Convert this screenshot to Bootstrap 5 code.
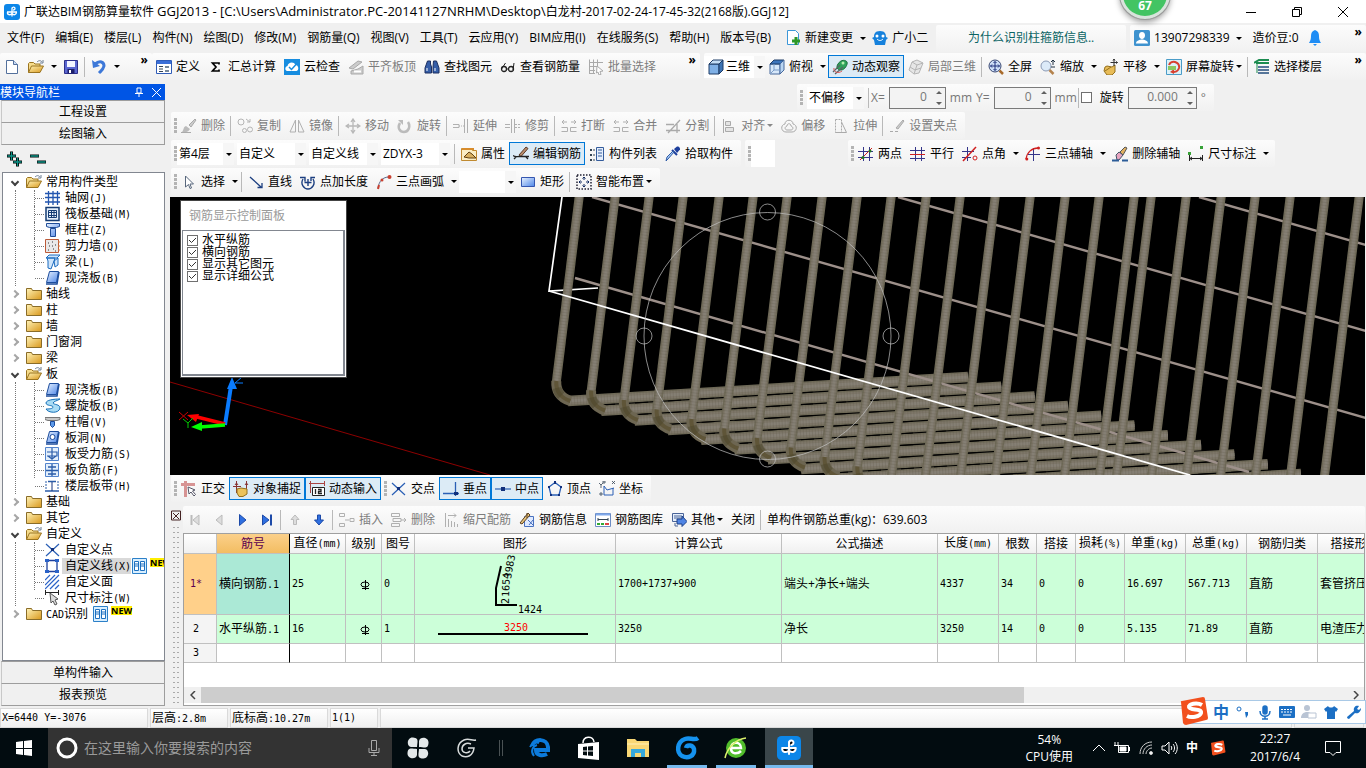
<!DOCTYPE html>
<html lang="zh-CN">
<head>
<meta charset="utf-8">
<meta name="viewport" content="width=device-width, initial-scale=1">
<title>广联达BIM钢筋算量软件 GGJ2013</title>
<link href="https://cdn.jsdelivr.net/npm/bootstrap@5.3.0/dist/css/bootstrap.min.css" rel="stylesheet">
<style>
:root{--face:#f0f0f0;--hot:#0078d7;--hotbg:#dcebf6}
body{font-family:"Open Sans","Noto Sans CJK SC",sans-serif;font-size:12px;line-height:16px;color:#000;background:var(--face);height:100vh;min-height:700px;overflow:hidden}
.mono{font-family:"DejaVu Sans Mono","Noto Sans CJK SC",monospace;font-size:10px}
.ic{width:16px;height:16px;flex:none;display:block;fill:none;stroke:none}
.titlebar{height:23px;background:#fff}
.path{font-size:13px}
.menurow{height:30px}
.menus{padding-left:2px}
.mainrow{height:31px}
.strip{display:flex;align-items:center;height:27px;background:linear-gradient(#fcfcfc,#f1f1f1);border-radius:2px;white-space:nowrap;flex:none}
.grip{width:3px;height:15px;margin-left:3px;background:repeating-linear-gradient(#b4b4b4 0 3px,transparent 3px 4px);flex:none}
.tool{display:flex;align-items:center;gap:4px;padding:0 4px;height:23px;border:0;border-radius:0;background:none;color:#000;font-size:12px;line-height:16px;white-space:nowrap;flex:none}
.tool:disabled{color:#7d7d7d;opacity:1;border:0}
.tool.on{background:var(--hotbg);box-shadow:inset 0 0 0 1px var(--hot)}
.menuitem{padding:0 6px 0 5px}
.drop{width:11px;height:22px;border:0;padding:0;background:none;flex:none;display:flex;align-items:center;justify-content:center}
.drop::after,.dd::after{content:"";border:3px solid transparent;border-top-color:#000;border-bottom:0}
.dd::after{margin-left:-2px}
.dd:disabled::after{border-top-color:#888}
.vline{width:1px;height:20px;background:#b9b9b9;margin:0 2px 0 1px;flex:none}
.combo{appearance:none;height:22px;border:0;border-radius:0;background:#fff url("data:image/svg+xml,%3Csvg xmlns='http://www.w3.org/2000/svg' width='11' height='22'%3E%3Cpath fill='%23f6f6f6' d='M0 0h11v22H0z'/%3E%3Cpath d='M3 10h6L6 13z'/%3E%3C/svg%3E") right center no-repeat;font-size:12px;line-height:16px;padding:0 12px 0 2px;margin-right:3px;color:#000;flex:none}
.w-s{width:57px}.w-m{width:69px}.w-v{width:41px}
.more{align-self:flex-start;border:0;background:none;padding:2px 4px 0;line-height:10px;font-size:12px;font-weight:700}
.spin{height:22px;border:1px solid #7a7a7a;background:#f3f3f3 url("data:image/svg+xml,%3Csvg xmlns='http://www.w3.org/2000/svg' width='12' height='20'%3E%3Cpath fill='%23606060' d='M3 6h6L6 3zM3 14h6L6 17z'/%3E%3C/svg%3E") right center no-repeat;color:#777;font-size:12px;text-align:right;padding:0 18px 2px 0;border-radius:0}
.dim{color:#777}
.teal{color:#0a6464}
.side{width:165px;padding-left:1px}
.work{padding-left:2px;padding-right:1px}
.sidehead{height:16px;background:#0055e5;color:#fff;line-height:15px;margin-left:-1px}
.navbtn{height:23px;background:var(--face);border:1px solid #9d9d9d;border-left-color:#c8c8c8;border-radius:0;font-size:12px;line-height:16px;padding:0;margin-top:-1px;text-align:center}
.tree{border:1px solid #828790;background:#fff;overflow:hidden;margin-left:1px;padding-top:1px}
.tree ul{list-style:none;margin:0;padding:0}
.node{display:flex;align-items:center;height:16px;gap:4px;white-space:nowrap}
.node>*,.kids .node::before{flex:none}
.node>.ic{margin-left:1px}
.top{padding-left:6px}
.twist{width:12px;height:12px;border:0;padding:0;background:none;flex:none;display:flex;align-items:center;justify-content:center}
.twist::before{content:"";width:6px;height:6px;border:solid #a6a6a6;border-width:2px 2px 0 0;transform:rotate(45deg)}
.open>.node>.twist::before{border-color:#404040;transform:rotate(135deg)}
.kids{margin-left:12px!important;border-left:1px dotted #777}
.kids .node{margin-left:18px;border-left:1px dotted #777}
.kids .node::before{content:"";width:9px;border-top:1px dotted #777;margin-right:-3px}
.kids .node:last-child{border-left-color:transparent}
.kids .ic{margin-left:0}
.picked{background:#d9d9d9;margin-left:-3px;padding-left:3px;height:16px}
.picked+.ic{margin-left:-3px}
.newtag{background:#ffee00;font-weight:700;font-size:9px;line-height:9px;align-self:flex-start;margin-left:-2px}
.view{background:#000;min-height:100px;overflow:hidden;margin-left:3px}
.scene{position:absolute;inset:0;width:100%;height:100%}
.ctl{position:absolute;left:10px;top:3px;width:167px;height:178px;background:#fff;border:1px solid #444}
.ctlhead{color:#9a9a9a;height:29px;line-height:22px}
.ctlist{border:solid #828790;border-width:1px 2px 2px 1px;margin:0 1px;height:146px;padding-top:3px}
.ctlist label{display:flex;align-items:center;height:12px;gap:4px;line-height:12px}
.tick{appearance:none;width:11px;height:11px;border:1px solid #707070;background:#fff;margin:0}
.tick:checked{background:url("data:image/svg+xml,%3Csvg xmlns='http://www.w3.org/2000/svg' width='9' height='9'%3E%3Cpath d='M1 4l2.500 2.500L8 2' fill='none' stroke='%23333'/%3E%3C/svg%3E") center no-repeat}
.dock{width:10px;margin-right:2px}
.dotgrip{width:8px;background:radial-gradient(circle,#aaa 1px,transparent 1px) 0 0/4px 5px}
.frame{height:173px;border:1px solid #a0a0a0;background:#fff;overflow:hidden}
.grid{table-layout:fixed;width:1240px;border-collapse:separate;border-spacing:0}
.grid th,.grid td{border:solid #c0c0c0;border-width:0 1px 1px 0;padding:0 0 0 2px;white-space:nowrap;overflow:hidden;vertical-align:middle;line-height:14px}
.grid thead th{height:20px;font-weight:400;text-align:center;background:linear-gradient(#fff,#f0f0f0);padding:0}
.grid tbody th{font-weight:400;text-align:center;padding:0 8px 0 0;background:#f4f4f4}
.grid .filled td{background:#ccffd9}
.grid tr>:nth-child(2){border-right-color:#000}
.grid thead th.hot{background:linear-gradient(#fbd08a,#f3bd62);color:#5b0050}
.grid tbody th.hot{background:#ffd08a;color:#5b0050}
.grid .filled td.cell{background:#abe9d6}
.r1{height:61px}.r2{height:29px}.r3{height:19px}
.fig{padding:0!important}.fig svg{display:block}
.sbar{height:16px;background:#f0f0f0;margin-bottom:2px}
.sarrow{width:17px;border:0;padding:0;background:none;line-height:0}
.sthumb{width:823px;background:#cdcdcd}
.status{height:22px;padding-top:2px}
.status>div{border:1px solid #dadada;background:linear-gradient(#fff,#f0f0f0);margin-right:2px;padding-left:1px;line-height:17px}
.task{height:40px;background:#020c10;color:#fff}
.task button{border:0;background:none;padding:0;height:40px;display:flex;align-items:center;justify-content:center;color:#fff;flex:none}
.find{background:#333;width:344px}
.find input{background:none;border:0;font-size:14px;color:#fff;padding:0;width:276px;outline:0;margin-left:-2px}
.find input::placeholder{color:#9a9a9a;opacity:1}
.task .run{box-shadow:inset 0 -3px #76b9ed}
.app{width:40px;margin-right:9px}
.task .cur{background:#3a464a}
.badge67{position:absolute;right:196px;top:-30px;width:50px;height:49px;border-radius:50%;background:#43c463;border:3px solid #d9e3dc;outline:1px solid #9a9a9a;box-shadow:0 3px 6px #0006;color:#fff;font-weight:700;text-align:center;padding-top:25px;line-height:16px}
.ime{position:absolute;right:0;bottom:44px;height:24px;background:#fff;border:1px solid #a9c9e6;padding:0 1px 0 21px}
.ime .logo{position:absolute;left:-10px;top:-5px;width:30px;height:30px}
.tiny{width:22px;height:22px;border:0;padding:0;background:none;display:flex;align-items:center;justify-content:center;color:#1c6fc4}
.lead1{margin-left:630px}.lead2{margin-left:73px}
.wctl{width:46px;height:22px;border:0;background:none;padding:0;display:flex;align-items:center;justify-content:center}
</style>
</head>
<body class="d-flex flex-column position-relative">
<svg width="0" height="0" class="position-absolute">
<defs>
<linearGradient id="gy" x1="0" y1="0" x2="1" y2="1"><stop offset="0" stop-color="#fff3b8"/><stop offset="1" stop-color="#d9981c"/></linearGradient>
<linearGradient id="gb" x1="0" y1="0" x2="1" y2="1"><stop offset="0" stop-color="#e9f3ff"/><stop offset="1" stop-color="#4d86e8"/></linearGradient>
</defs>
<symbol id="i-app" viewBox="0 0 16 16"><rect width="16" height="16" rx="3" fill="#0c86e8"/><path d="M8 3.500v9M3 8h10M8 7.500V5c0-2.500 3-2.500 3-.5 0 1-1 1.500-2 1.500M3.500 8c-.5 3 3 3.500 4.500 1.500M12.500 8c0 3-3 3.500-4.500 1.500" stroke="#fff" stroke-width="1.300"/></symbol>
<symbol id="i-new" viewBox="0 0 16 16"><path d="M2.500 1.500h7l4 4v9h-11z" fill="#fff" stroke="#53709c"/><path d="M9.500 1.500v4h4" fill="#c9dbf5" stroke="#53709c"/></symbol>
<symbol id="i-open" viewBox="0 0 16 16"><path d="M.5 13.500v-9l1-1h4l1.500 1.500h5v2" fill="#f6dc8c" stroke="#9a7420"/><path d="M.5 13.500l3-6.500h12l-3.500 6.500z" fill="url(#gy)" stroke="#9a7420"/><path d="M9 3c2-2 4-1.500 5 0m1-2v3h-3" stroke="#6a7c92"/></symbol>
<symbol id="i-save" viewBox="0 0 16 16"><path d="M1.500 1.500h13v13h-13z" fill="#5a66d0" stroke="#2c2f8a"/><path d="M4 2h8v6H4z" fill="#f2f4ff"/><path d="M4.500 10h7v4.500h-7z" fill="#1c1f6a"/><path d="M6 11h2v3H6z" fill="#fff"/></symbol>
<symbol id="i-undo" viewBox="0 0 16 16"><path d="M1 1l1 8 7-2z" fill="#3d78d8"/><path d="M4 5c5-4 9-2 9 2-1 4-3 5-5 7" stroke="#3d78d8" stroke-width="3"/></symbol>
<symbol id="i-def" viewBox="0 0 16 16"><path d="M.5 1.500h15v13H.5z" fill="#fff" stroke="#2f5cb8"/><path d="M1 2h14v3H1z" fill="#3b6fd8"/><path d="M3 7.500h4m-4 2.500h4m-4 2.500h4" stroke="#345" /><path d="M9 7h4v2H9zm0 4h4v2H9z" fill="#789"/></symbol>
<symbol id="i-sum" viewBox="0 0 16 16"><path d="M11 5.500V4H4.500L8 8l-3.500 4H11v-1.500" stroke="#000" stroke-width="1.700"/></symbol>
<symbol id="i-cloud" viewBox="0 0 16 16"><path d="M0 0h16v16H0z" fill="#178de0"/><path d="M3 12c-3-1-1.500-5 .5-5C4 3 10 2 11.500 6c3 0 4 5 1 6z" fill="#fff"/><path d="M5 8l2.500 2.500L12 5.500" stroke="#178de0" stroke-width="1.500"/></symbol>
<symbol id="i-flat" viewBox="0 0 16 16"><path d="M1 9l9-7 4 1-9 7zM3 12v3h12V7l-5 3z" fill="#ccc" stroke="#aaa"/><path d="M6 12.500h7" stroke="#fff" stroke-width="2"/></symbol>
<symbol id="i-find" viewBox="0 0 16 16"><path d="M3.500 2h3v3l1 3v6H1V9zM9.500 2h3L15 9v5H9V8z" fill="#355ea8" stroke="#1d2f60"/><path d="M3 9v3m8-3v3" stroke="#fff"/></symbol>
<symbol id="i-glass" viewBox="0 0 16 16"><circle cx="4" cy="10" r="2.500" stroke="#222" stroke-width="1.300"/><circle cx="11" cy="10" r="2.500" stroke="#222" stroke-width="1.300"/><path d="M6.500 10h2M1.500 10l4-6M13 11l1-7" stroke="#222"/></symbol>
<symbol id="i-batch" viewBox="0 0 16 16"><path d="M1.500.5v14M5.500.5v14M9.500.5v8M1 3.500h14M1 7.500h9M1 11.500h6M1 14.500h6" stroke="#aaa"/><path d="M9 7l6 5-3 .5 1 3-2 .5-1-3-1.500 1z" fill="#fff" stroke="#aaa"/></symbol>
<symbol id="i-cube" viewBox="0 0 16 16"><path d="M1 5h10v10H1z" fill="#7fb0e6" stroke="#1f3c66"/><path d="M1 5l4-4h10l-4 4z" fill="#c4def6" stroke="#1f3c66"/><path d="M11 5l4-4v10l-4 4z" fill="#3e74b4" stroke="#1f3c66"/></symbol>
<symbol id="i-topv" viewBox="0 0 16 16"><path d="M1 5h10v10H1z" fill="#d7e8fa" stroke="#47699c"/><path d="M1 5l4-4h10l-4 4z" fill="#3d76bd" stroke="#1f3c66"/><path d="M11 5l4-4v10l-4 4z" fill="#b9d5f2" stroke="#47699c"/><path d="M5 5v6l-4 4m4-4h6" stroke="#7b9cc8"/></symbol>
<symbol id="i-orbit" viewBox="0 0 16 16"><path d="M6 5c3-5 8-4 9-2s-2 8-6 8-5-3-3-6z" fill="#2fa35c" stroke="#1a6e3c"/><path d="M1 13L8 6M3 15l8-7" stroke="#566" stroke-width="1.300"/><circle cx="11" cy="4" r="1.500" fill="#b4efb0"/><path d="M2 9c-1 4 4 6 8 3" stroke="#d55"/></symbol>
<symbol id="i-part" viewBox="0 0 16 16"><path d="M4 3l5-2 6 3-4 10-5 1-5-4z" fill="#e6e6e6" stroke="#b5b5b5"/><path d="M4 3l5 3 6-2M9 6l-3 9M2 8l5 3 6-2" stroke="#b5b5b5"/></symbol>
<symbol id="i-full" viewBox="0 0 16 16"><circle cx="7" cy="7" r="6" fill="#cfe0f8" stroke="#3b4a74"/><path d="M7 2.500v9M2.500 7h9M5.500 4L7 2.500 8.500 4m-3 6L7 11.500 8.500 10M4 5.500L2.500 7 4 8.500m6-3L11.500 7 10 8.500" stroke="#1c2f7a"/><path d="M11.500 11.500L15 15" stroke="#a86b2c" stroke-width="2.500"/></symbol>
<symbol id="i-zoom" viewBox="0 0 16 16"><circle cx="6" cy="7" r="5" fill="#dceaf8" stroke="#8b9ab5"/><path d="M9.500 11l4 4" stroke="#b4824c" stroke-width="2.500"/><path d="M13 1v5m-2-3l2-2 2 2M11 8h4" stroke="#234"/></symbol>
<symbol id="i-pan" viewBox="0 0 16 16"><path d="M2 8l2-1 5 1 3-2v7l-3 3H4l-3-4z" fill="#e8bc58" stroke="#95701c"/><path d="M2 12l6-4" stroke="#95701c"/><path d="M11 0v7M7.500 3.500h7M10 1.500L11 0l1 1.500M13 2.500l1.500 1L13 4.500" stroke="#333"/></symbol>
<symbol id="i-srot" viewBox="0 0 16 16"><path d="M.5.500h15v15H.5z" fill="#dcf1f8" stroke="#4a9cc8"/><path d="M3 6c2-6 11-3 10 3-1 3-3 4-5 4" stroke="#d84030" stroke-width="2"/><path d="M8 10v5l-4-2z" fill="#d84030"/><path d="M2 7h8v4H2z" fill="#8cc860"/></symbol>
<symbol id="i-floor" viewBox="0 0 16 16"><path d="M0 4l5-3h10M2 4h13" stroke="#1c8c50" stroke-width="2"/><path d="M4 8h11M4 11h11M4 14h11" stroke="#234c7c" stroke-width="1.700"/><path d="M3 5v9" stroke="#1c8c50"/></symbol>
<symbol id="i-chg" viewBox="0 0 16 16"><path d="M2.500.500h8l3 3v11h-11z" fill="#fff" stroke="#3b97d8"/><path d="M11 7v8M7 11h8" stroke="#2c9828" stroke-width="3"/></symbol>
<symbol id="i-bot" viewBox="0 0 16 16"><path d="M8 1c5 0 6 3 6 6l2 1-2 2-1 5H3L2 10 0 8l2-1c0-3 1-6 6-6z" fill="#1681dc"/><circle cx="5" cy="6" r="1.500" fill="#fff"/><circle cx="11" cy="6" r="1.500" fill="#fff"/><path d="M5 9c2 2 4 2 6 0" stroke="#fff"/></symbol>
<symbol id="i-user" viewBox="0 0 16 16"><rect width="16" height="16" rx="1.500" fill="#3f93cf"/><path d="M8 2c2 0 3 1.500 3 3.500S9.500 9 8 9 5 7.500 5 5.500 6 2 8 2zM2 13.500c0-3 4-4 6-4s6 1 6 4z" fill="#fff"/></symbol>
<symbol id="i-bell" viewBox="0 0 16 16"><path d="M8 0c3 1 4 3 4 6 0 4 1 5 2 7H2c1-2 2-3 2-7 0-3 1-5 4-6z" fill="#1f8df5"/><path d="M6 14h4l-2 2z" fill="#1f8df5"/></symbol>
<symbol id="i-brush" viewBox="0 0 16 16"><path d="M8 7l6-6 1 1-5 7z" fill="#ccc" stroke="#aaa"/><path d="M5 8l4 3c-2 4-5 3-8 3 2-2 1-5 4-6z" fill="#bbb"/><path d="M0 14.500h10" stroke="#aaa"/></symbol>
<symbol id="i-copy" viewBox="0 0 16 16"><circle cx="4" cy="4" r="3" stroke="#b5b5b5"/><circle cx="7.500" cy="12.500" r="2" stroke="#b5b5b5"/><circle cx="13" cy="11.500" r="2.500" stroke="#b5b5b5"/><path d="M9 1l4 3m0-3v3h-3" stroke="#b5b5b5"/></symbol>
<symbol id="i-mir" viewBox="0 0 16 16"><path d="M6.500 2v12H1z M9.500 2v12H15z" stroke="#b0b0b0"/></symbol>
<symbol id="i-move" viewBox="0 0 16 16"><path d="M8 2v12M2 8h12M6 4l2-3 2 3M6 12l2 3 2-3M4 6L1 8l3 2m8-4l3 2-3 2" stroke="#b8b8b8" stroke-width="1.300"/></symbol>
<symbol id="i-rot" viewBox="0 0 16 16"><path d="M3 5c-3 5 0 9 4 9s7-5 4-10" stroke="#bbb" stroke-width="2.500"/><path d="M1 2h5v5z" fill="#bbb"/></symbol>
<symbol id="i-ext" viewBox="0 0 16 16"><path d="M0 6.500h6v3H0M11.500 1v14M14.500 1v14" stroke="#b0b0b0"/><path d="M6 8h5" stroke="#b0b0b0" stroke-dasharray="1 1"/></symbol>
<symbol id="i-trim" viewBox="0 0 16 16"><path d="M0 6.500h5M0 9.500h5M6.500 1v14M9.500 1v14" stroke="#b0b0b0"/><path d="M10 6.500h5m-5 3h5" stroke="#b0b0b0" stroke-dasharray="2 1"/></symbol>
<symbol id="i-brk" viewBox="0 0 16 16"><path d="M1 4h5m4 0h5M3 2L1 4l2 2m10-4l2 2-2 2M.5 9.500h6v4h-6M15.500 9.500h-6v4h6" stroke="#b0b0b0"/></symbol>
<symbol id="i-split" viewBox="0 0 16 16"><path d="M1 6.500h8M1 12.500h14M3 15L15 2M12 6v9" stroke="#aaa" stroke-width="1.300"/></symbol>
<symbol id="i-al" viewBox="0 0 16 16"><path d="M2.500 1v14" stroke="#aaa"/><path d="M4.500 3.500h5v4h-5zM4.500 9.500h8v4h-8z" stroke="#aaa" fill="#e4e4e4"/></symbol>
<symbol id="i-off" viewBox="0 0 16 16"><path d="M4 6c0-5 8-5 8 0 5 1 4 8-1 8H5C0 14-1 7 4 6z" stroke="#aaa"/><path d="M6 8c0-3 4-3 4 0 3 1 2 4 0 4H6c-2 0-3-3 0-4z" stroke="#aaa"/></symbol>
<symbol id="i-str" viewBox="0 0 16 16"><path d="M2.500 1.500h6v13h-6z" stroke="#aaa" stroke-dasharray="2 1"/><path d="M8.500 4l5 10.500h-11" stroke="#aaa"/></symbol>
<symbol id="i-grip" viewBox="0 0 16 16"><path d="M1 13.500h3m2 0h3M7 10l7-8 1 1-6 8z" stroke="#aaa" fill="#ccc"/></symbol>
<symbol id="i-prop" viewBox="0 0 16 16"><path d="M.5 2.500h10l1 2h4v10H.5z" fill="#fbeec4" stroke="#c08a30"/><path d="M1 3h12" stroke="#d88c2c" stroke-width="2"/><path d="M3 11l5-5 3 2 4 4H8z" fill="#d8b060" stroke="#604010"/></symbol>
<symbol id="i-edit" viewBox="0 0 16 16"><path d="M6 9l7-8 2 1.500-7 8z" fill="#b98d6c" stroke="#5c3a28"/><path d="M0 9.500c2 2 4 1 6 1h10M1 13l2-2m10 0l2 2" stroke="#222" stroke-width="1.300"/></symbol>
<symbol id="i-list" viewBox="0 0 16 16"><path d="M7.500 1.500h7v13h-7z" fill="#e4eefc" stroke="#345c9c"/><path d="M9 4h4M9 7h4M9 10h4" stroke="#345c9c"/><path d="M1 3h2v2H1zm0 5h2v2H1zm0 5h2v2H1z" fill="#345"/><path d="M4 4h2m-2 5h2m-2 5h2" stroke="#345"/></symbol>
<symbol id="i-pick" viewBox="0 0 16 16"><path d="M9 3l3-2.500c3 0 3 2 3 3L12 7z" fill="#1d3f9c"/><path d="M7 4l5 5" stroke="#1d3f9c" stroke-width="2"/><path d="M9 6l-6 7-2 2 1-4 6-6z" fill="#a9cbf4" stroke="#2f5ca8"/></symbol>
<symbol id="i-2p" viewBox="0 0 16 16"><path d="M5.500 1v14M11.500 1v14M0 5.500h15M0 11.500h15" stroke="#35358a"/><path d="M2 14L14 2" stroke="#d02020"/><circle cx="5" cy="11.500" r="1.500" fill="#207a20"/><circle cx="12" cy="5" r="1.500" fill="#207a20"/></symbol>
<symbol id="i-par" viewBox="0 0 16 16"><path d="M5.500 1v14M11.500 1v14M0 4.500h15M0 12.500h15" stroke="#35358a"/><path d="M0 8.500h15" stroke="#d02020"/></symbol>
<symbol id="i-ang" viewBox="0 0 16 16"><path d="M5.500 1v14M0 5.500h12M0 11.500h9" stroke="#35358a"/><path d="M1 15L14 1" stroke="#d02020" stroke-width="1.500"/><circle cx="13" cy="12" r="2" stroke="#d02020"/></symbol>
<symbol id="i-3ax" viewBox="0 0 16 16"><path d="M8.500 2v13M3 8.500h12" stroke="#35358a"/><path d="M1 13C2 6 7 2 13 2" stroke="#d02020" stroke-width="1.300"/><circle cx="1.800" cy="13" r="1.500" fill="#d02020"/><circle cx="13.500" cy="2" r="1.500" fill="#d02020"/></symbol>
<symbol id="i-dax" viewBox="0 0 16 16"><path d="M8 6l5-5 2 1-4 7z" fill="#e0b060" stroke="#555"/><path d="M4 9l3-3 4 3-4 5H5z" fill="#e8a4c0" stroke="#456"/><path d="M0 14.500h7m3 0h6" stroke="#2c5c98" stroke-width="2"/></symbol>
<symbol id="i-dim" viewBox="0 0 16 16"><path d="M1.500 9v6M14.500 9v6M2 12.500h12M4 11l-2 1.500L4 14m8-3l2 1.500-2 1.500" stroke="#222"/><path d="M0 6h3v3H0zM12 0h3v3h-3z" fill="#37a237"/></symbol>
<symbol id="i-sel" viewBox="0 0 16 16"><path d="M4.500 2v11l3-2.500 1.500 4 1.500-.5-1.500-4h3.500z" fill="#fff" stroke="#58677c"/></symbol>
<symbol id="i-line" viewBox="0 0 16 16"><path d="M2 3l11 10M9.500 13.500H14V9" stroke="#1c3f80" stroke-width="1.300"/></symbol>
<symbol id="i-len" viewBox="0 0 16 16"><path d="M3 5c-3 5 1 10 5 10s8-5 5-10M0 3.500h5v4M11 7V3.500h4M8 5v7M4.500 8.500h7" stroke="#1c3f80" stroke-width="1.400"/></symbol>
<symbol id="i-arc" viewBox="0 0 16 16"><path d="M2 14C3 7 7 3 13 3" stroke="#56688c"/><path d="M2 15l1-4" stroke="#c84030" stroke-width="2"/><circle cx="13.500" cy="3" r="2" fill="#c84030"/><circle cx="6" cy="6" r="1.500" fill="#c84030"/></symbol>
<symbol id="i-rect" viewBox="0 0 16 16"><path d="M1.500 3.500h13v9h-13z" fill="url(#gb)" stroke="#3456b0"/></symbol>
<symbol id="i-smart" viewBox="0 0 16 16"><path d="M1 1h14v14H1z" stroke="#223" stroke-width="1.500" stroke-dasharray="1.500 1.500"/><path d="M8 3v3m0 4v3M3 8h3m4 0h3M6.500 4.500L8 3l1.500 1.500m-3 7L8 13l1.500-1.500m-5-5L3 8l1.500 1.500m7-3L13 8l-1.500 1.500" stroke="#112a60"/></symbol>
<symbol id="i-ortho" viewBox="0 0 16 16"><path d="M0 3.500h14M4.500 0v16" stroke="#c96a6a" stroke-width="3" opacity=".7"/><path d="M7 6l1 7 2-2 3 4 1.500-1.500-3-3.500 2.500-1z" fill="#fff" stroke="#556"/></symbol>
<symbol id="i-snap" viewBox="0 0 16 16"><path d="M3.500 0v12M13.500 0v9M0 5.500h8M2 4l1.500-2L5 4m7 0l1.500-2L15 4" stroke="#833"/><path d="M4 8l4-1 6 1v5l-4 2.500H6L4 12z" fill="#ecc35c" stroke="#95701c"/></symbol>
<symbol id="i-dyn" viewBox="0 0 16 16"><path d="M0 2.500h16M1.500 0v12M15.500 0v5" stroke="#a44"/><path d="M3.500 6.500h12v8h-12z" fill="#fff" stroke="#222"/><path d="M6.500 8v5M9 8.500h3v2H9.500v2H13" stroke="#222" stroke-width="1.300"/></symbol>
<symbol id="i-x" viewBox="0 0 16 16"><path d="M1 2l13 12M14 2L1 14" stroke="#2a5fb5" stroke-width="1.200"/><path d="M6 6h3v3H6z" fill="#12307c"/></symbol>
<symbol id="i-perp" viewBox="0 0 16 16"><path d="M0 12.500h16M12.500 1v14" stroke="#2a5fb5" stroke-width="1.300"/><path d="M11 11h4v3h-4z" fill="#12307c"/></symbol>
<symbol id="i-mid" viewBox="0 0 16 16"><path d="M0 8h16" stroke="#2a5fb5" stroke-width="1.200"/><path d="M6 6h4v4H6z" fill="#12307c"/></symbol>
<symbol id="i-pent" viewBox="0 0 16 16"><path d="M8 1.500l6 4.500-2 8H4L2 6z" stroke="#2a5fb5" stroke-width="1.300"/><path d="M7 0h2v3H7zM1 5h2v2H1zm12 0h2v2h-2zM3 13h2v2H3zm8 0h2v2h-2z" fill="#12307c"/></symbol>
<symbol id="i-coord" viewBox="0 0 16 16"><path d="M5 5l3 4 7-2M5 5v9h9V7" stroke="#2a5fb5"/><path d="M0 2l2 2 2-2M2 4v3M13 0l3 3m0-3l-3 3M4 0h2v2H4zM1 12h2v2H1z" stroke="#345" stroke-width=".8"/></symbol>
<symbol id="i-first" viewBox="0 0 16 16"><path d="M4.500 3v10" stroke="#bbb" stroke-width="2"/><path d="M12 3v10L6 8z" fill="#ddd" stroke="#bbb"/></symbol>
<symbol id="i-prev" viewBox="0 0 16 16"><path d="M11 3v10L5 8z" fill="#ddd" stroke="#bbb"/></symbol>
<symbol id="i-next" viewBox="0 0 16 16"><path d="M4.500 2.500v11L11 8z" fill="#2f6fe0" stroke="#1d4aa8"/></symbol>
<symbol id="i-last" viewBox="0 0 16 16"><path d="M3.500 3v10L10 8z" fill="#2f6fe0" stroke="#1d4aa8"/><path d="M12 2.500v11" stroke="#1d4aa8" stroke-width="2"/></symbol>
<symbol id="i-up" viewBox="0 0 16 16"><path d="M8 3l4 4.500H9.500v5h-3v-5H4z" fill="#ddd" stroke="#bbb"/></symbol>
<symbol id="i-down" viewBox="0 0 16 16"><path d="M8 13l4.500-5h-3V3h-3v5h-3z" fill="#2f6fe0" stroke="#1d4aa8"/></symbol>
<symbol id="i-ins" viewBox="0 0 16 16"><path d="M.5 1.500h5v3h-5zM.5 11.500h5v3h-5zM6 8h4M11 6.500h4v3h-4z" stroke="#b0b0b0"/></symbol>
<symbol id="i-del" viewBox="0 0 16 16"><path d="M.5 1.500h8v3h-8zM.5 11.500h8v3h-8zM10 8h5m-2-2l2 2-2 2M2 6.500h8v3H2z" stroke="#b0b0b0"/></symbol>
<symbol id="i-scale" viewBox="0 0 16 16"><path d="M2.500 1v14M5 3.500h8m-2-2l2 2-2 2M5.500 7v8M8.500 9v6M11.500 10v5M14.500 12v3" stroke="#b0b0b0"/></symbol>
<symbol id="i-info" viewBox="0 0 16 16"><path d="M5.500 4.500h9v10h-9z" fill="#dfeaff" stroke="#4a72c0"/><path d="M8 1v5M1 11L9 1l2 2-8 9z" fill="#e7c47c" stroke="#5c4020"/><path d="M9 8l5 5m0-5l-4 5" stroke="#4a72c0"/></symbol>
<symbol id="i-lib" viewBox="0 0 16 16"><path d="M.5 1.500h15v13H.5z" fill="#fff" stroke="#6c8cc4"/><path d="M1 2.500h14" stroke="#7fa8ea" stroke-width="2"/><path d="M3 7.500h10M3 6v3m10-3v3" stroke="#345"/><path d="M2 12h3m1 0h3" stroke="#3a3" stroke-width="2"/><path d="M10 12h4" stroke="#d44" stroke-width="2"/></symbol>
<symbol id="i-oth" viewBox="0 0 16 16"><path d="M1.500 1.500h11v8h-11z" fill="#e6effc" stroke="#4a6498"/><path d="M3 4h8M3 6h8M4 11v3h3" stroke="#4a6498"/><path d="M6 7h5V4l5 5.500-5 5V12H6z" fill="#4f84e4" stroke="#1d4088"/></symbol>
<symbol id="i-fold" viewBox="0 0 16 16"><path d="M.5 2.500h5l1 2h9v9H.5z" fill="url(#gy)" stroke="#8a6c28"/></symbol>
<symbol id="i-grid" viewBox="0 0 16 16"><path d="M3.500 1v14M8 1v14M12.500 1v14M0 3.500h15M0 7.500h15M0 12h15" stroke="#2356b0" stroke-width="1.300"/></symbol>
<symbol id="i-raft" viewBox="0 0 16 16"><path d="M1 1.500h13v13H1z" fill="#e6f0fc" stroke="#153c74" stroke-width="1.500"/><path d="M3.500 4.500h8v7h-8zM6.500 4v8m2.500-8v8M3 6.500h9m-9 3h9" stroke="#153c74"/></symbol>
<symbol id="i-col" viewBox="0 0 16 16"><path d="M1.500 1.500h13v3l-3 1h-7l-3-1zM5.500 6.500h5v8h-5z" fill="url(#gb)" stroke="#1f4c98"/></symbol>
<symbol id="i-wall" viewBox="0 0 16 16"><path d="M.5 1.500h13v13H.5z" fill="#e9e9e9" stroke="#bb5a38"/><path d="M3 5h1m3-1h1m2 3h1M4 8h1m3 3h1m-6 1h1m6 1h1m-4-5h1" stroke="#333"/><path d="M13 4h2m-2 4h2m-2 4h2" stroke="#d87c3c"/></symbol>
<symbol id="i-beam" viewBox="0 0 16 16"><path d="M1 4l3-3h11l-3 3zM2 4l8 0-1 3-3 8-3-1V7zM9 7l4-3v7l-3 2z" fill="#cfe5fb" stroke="#1c6cc0"/></symbol>
<symbol id="i-slab" viewBox="0 0 16 16"><path d="M4.500 1.500h9l-2 11h-10z" fill="url(#gb)" stroke="#1c4c9c"/><path d="M1 14h11l2-12" stroke="#1c4c9c" stroke-width="1.500"/></symbol>
<symbol id="i-spir" viewBox="0 0 16 16"><path d="M15 1C9 1 1 2 1 5s7 2 7 4-5 2-7 2c2 4 13 5 14-1 0-4-6-3-7-5 1-2 4-2 7-4z" fill="#a9dcf5" stroke="#1770b8"/></symbol>
<symbol id="i-cap" viewBox="0 0 16 16"><path d="M0 3.500h15v2l-3 1H3L0 5.500z" fill="#c8c8c8" stroke="#777"/><path d="M5.500 7.500h4v4l-2 2-2-2z" fill="#5d9ae8" stroke="#1c4c9c"/></symbol>
<symbol id="i-hole" viewBox="0 0 16 16"><path d="M4.500 1.500h9l-2 11h-10z" fill="url(#gb)" stroke="#1c4c9c"/><circle cx="7.500" cy="7" r="2.500" fill="#fff" stroke="#1c4c9c"/><path d="M1 14h11l2-12" stroke="#1c4c9c" stroke-width="1.500"/></symbol>
<symbol id="i-srb" viewBox="0 0 16 16"><path d="M.5 1.500h13v13H.5z" fill="#e3effc" stroke="#5484cc"/><path d="M7 2v12M2 6h10v4H2M11 10l-4 3-4-3" stroke="#2b5ca8" stroke-width="1.200"/></symbol>
<symbol id="i-neg" viewBox="0 0 16 16"><path d="M.5 1.500h13v13H.5z" fill="#e3effc" stroke="#5484cc"/><path d="M7 2v12M1 8.500h12M3 5h8M3 12h8" stroke="#2b5ca8" stroke-width="1.300"/></symbol>
<symbol id="i-band" viewBox="0 0 16 16"><path d="M0 13h14M3 3.500h8" stroke="#2b5ca8" stroke-width="1.500"/><path d="M1 3v9m12-9v9" stroke="#2b5ca8" stroke-dasharray="2 1"/><path d="M7 4v9" stroke="#12307c"/></symbol>
<symbol id="i-poly" viewBox="0 0 16 16"><path d="M2 2.500h10v11H2z" stroke="#1d3f9c" stroke-width="1.300"/><path d="M0 1h4v3H0zm10 0h4v3h-4zM0 12h4v3H0zm10 0h4v3h-4z" fill="#2a62c8"/></symbol>
<symbol id="i-hat" viewBox="0 0 16 16"><path d="M0 6l5-5M0 11L10 1M0 15L14 1M5 15l9-9M10 15l4-4" stroke="#2a62c8" stroke-width="1.200"/></symbol>
<symbol id="i-dimc" viewBox="0 0 16 16"><path d="M.5 0v5m13-5v5M1 2.500h12" stroke="#222"/><path d="M5 3l1 10 2-2 2 4 2-1-2-4 3-1z" fill="#ddd" stroke="#555"/></symbol>
<symbol id="i-book" viewBox="0 0 16 16"><path d="M.5.500h14v15H.5z" fill="#d9efff" stroke="#2c80c8"/><path d="M2.500 3.500h4v9h-4zM8.500 3.500h4v9h-4z" fill="#fff" stroke="#1d70c0"/><path d="M3 6h3m-3 2h3m3-2h3m-3 2h3" stroke="#1d70c0"/></symbol>
<symbol id="i-bar3" viewBox="0 0 10 10"><ellipse cx="5" cy="4.500" rx="4" ry="2.500" fill="none" stroke="#000"/><path d="M5.500 0v10M2 8.500h7" stroke="#000"/></symbol>
<symbol id="i-sogou" viewBox="0 0 30 30"><path d="M2 6Q1 5 3 5L24 1q2 0 2 2l3 19q0 2-2 2L7 29q-2 0-3-2z" fill="#f2501e"/><path d="M23 9c-5-3-14-1-13 2 1 4 13 1 12 6-1 4-10 5-14 3" stroke="#fff" stroke-width="4"/></symbol>
</svg>

<header class="titlebar d-flex align-items-center flex-shrink-0">
<svg class="ic ms-1 me-1"><use href="#i-app"/></svg>
<span>广联达BIM钢筋算量软件 <span class="path">GGJ2013 - [C:\Users\Administrator.PC-20141127NRHM\Desktop\</span>白龙村-2017-02-24-17-45-32(2168版).GGJ12]</span>
<div class="d-flex ms-auto">
<button class="wctl" aria-label="最小化"><svg width="10" height="10"><path d="M0 5.500h10" stroke="#000"/></svg></button>
<button class="wctl" aria-label="还原"><svg width="10" height="10" fill="none" stroke="#000"><path d="M.5 2.500h7v7h-7zM2.500 2V.5h7v7H8"/></svg></button>
<button class="wctl" aria-label="关闭窗口"><svg width="10" height="10" stroke="#000"><path d="M0 0l10 10M10 0L0 10"/></svg></button>
</div>
</header>
<div class="badge67">67</div>

<nav class="menurow d-flex align-items-center flex-shrink-0">
<div class="menus d-flex align-items-center">
<button class="tool menuitem">文件(F)</button><button class="tool menuitem">编辑(E)</button><button class="tool menuitem">楼层(L)</button><button class="tool menuitem">构件(N)</button><button class="tool menuitem">绘图(D)</button><button class="tool menuitem">修改(M)</button><button class="tool menuitem">钢筋量(Q)</button><button class="tool menuitem">视图(V)</button><button class="tool menuitem">工具(T)</button><button class="tool menuitem">云应用(Y)</button><button class="tool menuitem">BIM应用(I)</button><button class="tool menuitem">在线服务(S)</button><button class="tool menuitem">帮助(H)</button><button class="tool menuitem">版本号(B)</button>
<button class="tool ms-1"><svg class="ic"><use href="#i-chg"/></svg>新建变更</button><button class="drop" aria-label="更多"></button>
<button class="tool"><svg class="ic"><use href="#i-bot"/></svg>广小二</button>
</div>
<div class="strip justify-content-center mx-1 flex-grow-1"><a href="#" class="teal text-decoration-none">为什么识别柱箍筋信息..</a></div>
<div class="strip"><button class="tool"><svg class="ic"><use href="#i-user"/></svg>13907298339</button><button class="drop" aria-label="账户"></button>
<button class="tool ms-1">造价豆:0</button><button class="tool" aria-label="通知"><svg class="ic"><use href="#i-bell"/></svg></button><button class="more ms-4">»</button></div>
</nav>

<div class="mainrow d-flex flex-shrink-0">
<div class="strip" style="width:152px">
<button class="tool" aria-label="新建"><svg class="ic"><use href="#i-new"/></svg></button><button class="tool" aria-label="打开"><svg class="ic"><use href="#i-open"/></svg></button><button class="drop" aria-label="更多"></button><button class="tool" aria-label="保存"><svg class="ic"><use href="#i-save"/></svg></button><span class="vline"></span><button class="tool" aria-label="撤销"><svg class="ic"><use href="#i-undo"/></svg></button><button class="drop" aria-label="更多"></button><button class="more ms-auto">»</button>
</div>
<div class="strip me-1" style="width:548px">
<button class="tool"><svg class="ic"><use href="#i-def"/></svg>定义</button><button class="tool"><svg class="ic"><use href="#i-sum"/></svg>汇总计算</button><button class="tool"><svg class="ic"><use href="#i-cloud"/></svg>云检查</button><button class="tool" disabled><svg class="ic"><use href="#i-flat"/></svg>平齐板顶</button><button class="tool"><svg class="ic"><use href="#i-find"/></svg>查找图元</button><button class="tool"><svg class="ic"><use href="#i-glass"/></svg>查看钢筋量</button><button class="tool" disabled><svg class="ic"><use href="#i-batch"/></svg>批量选择</button><button class="more ms-auto">»</button>
</div>
<div class="strip flex-grow-1">
<span class="d-flex align-items-center bg-white"><svg class="ic ms-1"><use href="#i-cube"/></svg><select class="combo w-v me-0" aria-label="视图模式"><option>三维</option></select></span>
<button class="tool"><svg class="ic"><use href="#i-topv"/></svg>俯视</button><button class="drop" aria-label="更多"></button>
<button class="tool on"><svg class="ic"><use href="#i-orbit"/></svg>动态观察</button><button class="tool" disabled><svg class="ic"><use href="#i-part"/></svg>局部三维</button><span class="vline"></span><button class="tool"><svg class="ic"><use href="#i-full"/></svg>全屏</button><button class="tool"><svg class="ic"><use href="#i-zoom"/></svg>缩放</button><button class="drop" aria-label="更多"></button><button class="tool"><svg class="ic"><use href="#i-pan"/></svg>平移</button><button class="drop" aria-label="更多"></button><button class="tool dd"><svg class="ic"><use href="#i-srot"/></svg>屏幕旋转</button><span class="vline"></span><button class="tool"><svg class="ic"><use href="#i-floor"/></svg>选择楼层</button><button class="more ms-auto">»</button>
</div>
</div>

<main class="d-flex flex-grow-1 overflow-hidden">
<aside class="side d-flex flex-column flex-shrink-0">
<div class="sidehead d-flex align-items-center"><span class="flex-grow-1">模块导航栏</span>
<svg width="10" height="10" class="me-2" fill="none" stroke="#fff"><path d="M3 1h4v5H3zM1 6.500h8M5 6v4"/></svg><svg width="9" height="9" class="me-1" stroke="#fff"><path d="M0 0l9 9M9 0L0 9"/></svg></div>
<button class="navbtn mt-0">工程设置</button><button class="navbtn">绘图输入</button>
<div class="d-flex align-items-center ps-1" style="height:27px"><svg width="48" height="16" fill="none"><path d="M2 5h9M6.500.500v9M8 11h9M12.500 6.500v9M25 5h9M32 11h9" stroke="#000" stroke-width="3"/><path d="M2.500 5h8M6.500 1v8M8.500 11h8M12.500 7v8M25.500 5h8M32.500 11h8" stroke="#0e9488" stroke-width="1.300"/></svg></div>
<nav class="tree flex-grow-1"><ul id="tree"></ul></nav>
<button class="navbtn mt-0">单构件输入</button><button class="navbtn">报表预览</button>
</aside>

<section class="work d-flex flex-column flex-grow-1 overflow-hidden">
<div class="d-flex flex-shrink-0" style="height:28px"><div class="strip lead1 pe-2"><span class="grip"></span>
<select class="combo ms-1 w-s" aria-label="偏移方式"><option>不偏移</option></select><span class="vline"></span>
<label class="dim me-1" for="ox">X=</label><input class="spin w-s" id="ox" value="0"><span class="dim mx-1">mm</span><label class="dim me-1" for="oy">Y=</label><input class="spin w-s" id="oy" value="0"><span class="dim ms-1">mm</span><span class="vline"></span>
<input type="checkbox" class="tick me-1" id="rt"><label for="rt" class="mx-1">旋转</label><input class="spin w-m" value="0.000" aria-label="旋转角度"><span class="dim ms-1">°</span></div></div>

<div class="d-flex flex-shrink-0" style="height:28px"><div class="strip ms-1 pe-1"><span class="grip"></span>
<button class="tool" disabled><svg class="ic"><use href="#i-brush"/></svg>删除</button><span class="vline"></span><button class="tool" disabled><svg class="ic"><use href="#i-copy"/></svg>复制</button><button class="tool" disabled><svg class="ic"><use href="#i-mir"/></svg>镜像</button><span class="vline"></span><button class="tool" disabled><svg class="ic"><use href="#i-move"/></svg>移动</button><button class="tool" disabled><svg class="ic"><use href="#i-rot"/></svg>旋转</button><span class="vline"></span><button class="tool" disabled><svg class="ic"><use href="#i-ext"/></svg>延伸</button><button class="tool" disabled><svg class="ic"><use href="#i-trim"/></svg>修剪</button><span class="vline"></span><button class="tool" disabled><svg class="ic"><use href="#i-brk"/></svg>打断</button><button class="tool" disabled><svg class="ic"><use href="#i-brk"/></svg>合并</button><button class="tool" disabled><svg class="ic"><use href="#i-split"/></svg>分割</button><span class="vline"></span><button class="tool dd" disabled><svg class="ic"><use href="#i-al"/></svg>对齐</button><button class="tool" disabled><svg class="ic"><use href="#i-off"/></svg>偏移</button><button class="tool" disabled><svg class="ic"><use href="#i-str"/></svg>拉伸</button><span class="vline"></span><button class="tool" disabled><svg class="ic"><use href="#i-grip"/></svg>设置夹点</button></div></div>

<div class="d-flex flex-shrink-0" style="height:28px"><div class="strip ms-1 pe-1"><span class="grip"></span>
<select class="combo w-s" aria-label="楼层"><option>第4层</option></select><select class="combo w-m" aria-label="类别"><option>自定义</option></select><select class="combo w-m" aria-label="构件类型"><option>自定义线</option></select><select class="combo w-m" aria-label="构件"><option>ZDYX-3</option></select><span class="vline"></span>
<button class="tool"><svg class="ic"><use href="#i-prop"/></svg>属性</button><button class="tool on"><svg class="ic"><use href="#i-edit"/></svg>编辑钢筋</button><button class="tool"><svg class="ic"><use href="#i-list"/></svg>构件列表</button><button class="tool"><svg class="ic"><use href="#i-pick"/></svg>拾取构件</button></div>
<div class="strip ms-1" style="width:30px"><span class="grip"></span><span class="bg-white flex-grow-1 h-100"></span></div>
<div class="strip lead2 pe-1"><span class="grip"></span><button class="tool"><svg class="ic"><use href="#i-2p"/></svg>两点</button><button class="tool"><svg class="ic"><use href="#i-par"/></svg>平行</button><button class="tool"><svg class="ic"><use href="#i-ang"/></svg>点角</button><button class="drop" aria-label="更多"></button><button class="tool"><svg class="ic"><use href="#i-3ax"/></svg>三点辅轴</button><button class="drop" aria-label="更多"></button><button class="tool"><svg class="ic"><use href="#i-dax"/></svg>删除辅轴</button><button class="tool"><svg class="ic"><use href="#i-dim"/></svg>尺寸标注</button><button class="drop" aria-label="更多"></button></div></div>

<div class="d-flex flex-shrink-0" style="height:29px"><div class="strip ms-1 pe-1"><span class="grip"></span>
<button class="tool"><svg class="ic"><use href="#i-sel"/></svg>选择</button><button class="drop" aria-label="更多"></button><span class="vline"></span><button class="tool"><svg class="ic"><use href="#i-line"/></svg>直线</button><button class="tool"><svg class="ic"><use href="#i-len"/></svg>点加长度</button><button class="tool"><svg class="ic"><use href="#i-arc"/></svg>三点画弧</button><button class="drop" aria-label="更多"></button><select class="combo w-s me-0" aria-label="画法"><option></option></select><button class="tool"><svg class="ic"><use href="#i-rect"/></svg>矩形</button><span class="vline"></span><button class="tool dd"><svg class="ic"><use href="#i-smart"/></svg>智能布置</button></div></div>

<div class="view flex-grow-1 position-relative">
<svg class="scene" id="scene" fill="none"></svg>
<div class="ctl"><div class="ctlhead px-2 py-1">钢筋显示控制面板</div>
<div class="ctlist ps-1">
<label><input type="checkbox" class="tick" checked>水平纵筋</label><label><input type="checkbox" class="tick" checked>横向钢筋</label><label><input type="checkbox" class="tick" checked>显示其它图元</label><label><input type="checkbox" class="tick" checked>显示详细公式</label>
</div></div>
</div>

<div class="d-flex flex-shrink-0" style="height:31px"><div class="strip ms-1"><span class="grip"></span>
<button class="tool"><svg class="ic"><use href="#i-ortho"/></svg>正交</button><button class="tool on"><svg class="ic"><use href="#i-snap"/></svg>对象捕捉</button><button class="tool on"><svg class="ic"><use href="#i-dyn"/></svg>动态输入</button></div>
<div class="strip pe-1"><span class="grip"></span><button class="tool"><svg class="ic"><use href="#i-x"/></svg>交点</button><button class="tool on"><svg class="ic"><use href="#i-perp"/></svg>垂点</button><button class="tool on"><svg class="ic"><use href="#i-mid"/></svg>中点</button><button class="tool"><svg class="ic"><use href="#i-pent"/></svg>顶点</button><button class="tool"><svg class="ic"><use href="#i-coord"/></svg>坐标</button></div></div>

<div class="d-flex flex-shrink-0 ms-1">
<div class="dock d-flex flex-column align-items-center"><svg width="10" height="11" class="my-1" fill="none" stroke="#422"><path d="M.5 1h9v9h-9zM2 3l6 6M8 3L2 9"/></svg><div class="dotgrip flex-grow-1"></div></div>
<div class="flex-grow-1 overflow-hidden">
<div class="strip">
<button class="tool" disabled aria-label="首条"><svg class="ic"><use href="#i-first"/></svg></button><button class="tool" disabled aria-label="上一条"><svg class="ic"><use href="#i-prev"/></svg></button><button class="tool" aria-label="下一条"><svg class="ic"><use href="#i-next"/></svg></button><button class="tool" aria-label="末条"><svg class="ic"><use href="#i-last"/></svg></button><span class="vline"></span><button class="tool" disabled aria-label="上移"><svg class="ic"><use href="#i-up"/></svg></button><button class="tool" aria-label="下移"><svg class="ic"><use href="#i-down"/></svg></button><span class="vline"></span>
<button class="tool" disabled><svg class="ic"><use href="#i-ins"/></svg>插入</button><button class="tool" disabled><svg class="ic"><use href="#i-del"/></svg>删除</button><button class="tool" disabled><svg class="ic"><use href="#i-scale"/></svg>缩尺配筋</button><button class="tool"><svg class="ic"><use href="#i-info"/></svg>钢筋信息</button><button class="tool"><svg class="ic"><use href="#i-lib"/></svg>钢筋图库</button><button class="tool dd"><svg class="ic"><use href="#i-oth"/></svg>其他</button><button class="tool">关闭</button><span class="vline"></span><span class="ms-1">单构件钢筋总重(kg)：639.603</span></div>
<div class="frame d-flex flex-column">
<div class="flex-grow-1 overflow-hidden">
<table class="grid">
<colgroup><col style="width:33px"><col style="width:73px"><col style="width:56px"><col style="width:36px"><col style="width:33px"><col style="width:201px"><col style="width:166px"><col style="width:156px"><col style="width:61px"><col style="width:38px"><col style="width:39px"><col style="width:49px"><col style="width:61px"><col style="width:61px"><col style="width:71px"><col></colgroup>
<thead><tr><th></th><th class="hot">筋号</th><th>直径<span class="mono">(mm)</span></th><th>级别</th><th>图号</th><th>图形</th><th>计算公式</th><th>公式描述</th><th>长度<span class="mono">(mm)</span></th><th>根数</th><th>搭接</th><th>损耗<span class="mono">(%)</span></th><th>单重<span class="mono">(kg)</span></th><th>总重<span class="mono">(kg)</span></th><th>钢筋归类</th><th class="text-start">&nbsp;&nbsp;&nbsp;&nbsp;搭接形式</th></tr></thead>
<tbody>
<tr class="r1 filled"><th class="hot mono">1*</th><td class="cell">横向钢筋<span class="mono">.1</span></td><td class="mono">25</td><td class="text-center"><svg width="10" height="10"><use href="#i-bar3"/></svg></td><td class="mono">0</td>
<td class="fig"><svg width="200" height="60"><path d="M86 12L81 34V51H102" fill="none" stroke="#000" stroke-width="2"/><g class="mono"><text x="103" y="59">1424</text><text transform="translate(94 50) rotate(-90)">2</text><text transform="translate(94 43) rotate(-88)">1654</text><text transform="translate(96 25) rotate(-80)">3983</text></g></svg></td>
<td class="mono">1700+1737+900</td><td>端头+净长+端头</td><td class="mono">4337</td><td class="mono">34</td><td class="mono">0</td><td class="mono">0</td><td class="mono">16.697</td><td class="mono">567.713</td><td>直筋</td><td>套管挤压</td></tr>
<tr class="r2 filled"><th class="mono">2</th><td>水平纵筋<span class="mono">.1</span></td><td class="mono">16</td><td class="text-center"><svg width="10" height="10"><use href="#i-bar3"/></svg></td><td class="mono">1</td>
<td class="fig"><svg width="200" height="28"><path d="M23 19h150" stroke="#000" stroke-width="2"/><text class="mono" x="89" y="16" fill="#f00">3250</text></svg></td>
<td class="mono">3250</td><td>净长</td><td class="mono">3250</td><td class="mono">14</td><td class="mono">0</td><td class="mono">0</td><td class="mono">5.135</td><td class="mono">71.89</td><td>直筋</td><td>电渣压力焊</td></tr>
<tr class="r3"><th class="mono">3</th><td></td><td></td><td></td><td></td><td></td><td></td><td></td><td></td><td></td><td></td><td></td><td></td><td></td><td></td><td></td></tr>
</tbody></table></div>
<div class="sbar d-flex align-items-stretch"><button class="sarrow" aria-label="左移"><svg width="6" height="9" fill="none" stroke="#444" stroke-width="1.500"><path d="M5 0L1 4l4 4"/></svg></button><div class="sthumb"></div><button class="sarrow ms-auto" aria-label="右移"><svg width="6" height="9" fill="none" stroke="#444" stroke-width="1.500"><path d="M1 0l4 4-4 4"/></svg></button></div>
</div></div></div>
</section>
</main>

<footer class="status d-flex flex-shrink-0">
<div class="mono" style="width:148px">X=6440 Y=-3076</div><div style="width:78px">层高<span class="mono">:2.8m</span></div><div style="width:98px">底标高<span class="mono">:10.27m</span></div><div class="mono" style="width:48px">1(1)</div><div class="flex-grow-1"></div><div style="width:70px"></div>
</footer>

<div class="task d-flex align-items-center flex-shrink-0">
<button style="width:48px" aria-label="开始"><svg width="16" height="16" fill="#fff"><path d="M0 2l7-1v7H0zM8 1l8-1v8H8zM0 9h7v6l-7-1zM8 9h8v7l-8-1z"/></svg></button>
<div class="find d-flex align-items-center h-100"><svg width="22" height="22" class="ms-2 me-2" fill="none"><circle cx="11" cy="11" r="9" stroke="#fff" stroke-width="3"/></svg><input type="text" placeholder="在这里输入你要搜索的内容" aria-label="搜索"><svg width="12" height="18" class="ms-2" fill="none" stroke="#aaa"><path d="M3.500 1.500h5v10h-5zM1 9v4.500h10V9M6 14v3M3 16.500h6"/></svg></div>
<button class="ms-1" style="width:44px" aria-label="应用"><svg width="22" height="22" fill="#e4e9ea"><g><path d="M10 10H4C-1 9 0 0 6 .5S10.500 4 10 10z"/><path d="M12 10V4c1-5 10-4 9.500 2S18 10.500 12 10z"/><path d="M12 12h6c5 1 4 10-2 9.500S11.500 18 12 12z"/><path d="M10 12v6c-1 5-10 4-9.500-2S4 11.500 10 12z"/></g></svg></button>
<button style="width:54px" aria-label="应用"><svg width="20" height="20" fill="none" stroke="#d8dcdc" stroke-width="1.500"><path d="M19 2c-4 1-7-2-12 0C0 5-1 14 5 18c5 2 11 0 12-8h-6M14 6C9 4 5 7 5 11s6 5 8 2"/></svg></button>
<svg width="6" height="18" class="ms-1 me-3" stroke="#4a5254"><path d="M1.500 1v16M4.500 1v16"/></svg>
<button class="app" aria-label="Edge"><svg width="22" height="22" fill="none"><path d="M3 9c3-8 15-8 16 1v3H7c0 6 7 6 11 4" stroke="#0c7bdc" stroke-width="4"/><path d="M1 10C4 5 8 5 10 6M5 19C1 14 4 9 8 8" stroke="#0c7bdc" stroke-width="2"/></svg></button>
<button class="app" aria-label="商店"><svg width="22" height="24"><path d="M0 8l21-2v18L0 22z" fill="#fff"/><path d="M5 7c0-7 10-8 11-1" fill="none" stroke="#fff" stroke-width="1.500"/><path d="M5 11l4-.5v4H5zM10 10.500l5-.5v4.500h-5zM5 15.500h4v4L5 19zM10 15.500h5V20l-5-.5z" fill="#020c10"/></svg></button>
<button class="app" aria-label="文件资源管理器"><svg width="22" height="20"><path d="M0 1h8l2 2h12v16H0z" fill="#f8d775"/><path d="M0 6h22" stroke="#fff0b8"/><path d="M4 19v-8h14v8h-4v-4H8v4z" fill="#35a8dc"/></svg></button>
<button class="app run" aria-label="广联达"><svg width="26" height="26" fill="none"><path d="M24 3c-4 3-8-1-13 1C3 7 2 17 8 21c6 3 13 0 12-7-1-4-7-5-8-1" stroke="#1592ee" stroke-width="4.500"/></svg></button>
<button class="app run" aria-label="浏览器"><svg width="24" height="24" fill="none"><circle cx="12" cy="12" r="10" fill="#51bd2c"/><path d="M7 12h10c0-7-10-7-10 0s7 6 10 3" stroke="#fff" stroke-width="2.500"/><path d="M1 22C3 12 12 3 22 2" stroke="#d9f06c" stroke-width="1.500"/></svg></button>
<button class="run cur" style="width:48px" aria-label="GGJ2013"><svg width="24" height="24"><use href="#i-app"/></svg></button>
<div class="ms-auto text-center me-3" style="line-height:17px">54%<br>CPU使用</div>
<div class="d-flex align-items-center gap-2 ms-1 me-4"><svg width="12" height="8" fill="none" stroke="#fff"><path d="M0 7l6-6 6 6"/></svg>
<svg width="18" height="14" fill="none" stroke="#fff"><path d="M5.500 4.500h10v7h-10zM16.500 6v4M2 1v3M5 1v3M1 4.500h5"/><path d="M7 6h6v4H7z" fill="#fff"/></svg>
<svg width="14" height="14" fill="none" stroke="#ccc"><path d="M1 13C1 6 6 1 13 1M4 13c0-5 4-9 9-9M7 13c0-3 3-6 6-6"/><circle cx="12" cy="12" r="1.500" fill="#fff"/></svg>
<svg width="17" height="14" fill="none" stroke="#fff"><path d="M1 5h3l4-4v12L4 9H1zM10 5c1 1 1 3 0 4M12 3c2 2 2 6 0 8M14 1c3 3 3 9 0 12"/></svg>
<span class="fw-bold">中</span><svg width="16" height="16" viewBox="0 0 30 30" fill="none" class="ms-1"><use href="#i-sogou"/></svg></div>
<div class="text-center me-4" style="line-height:18px">22:27<br>2017/6/4</div>
<button class="me-4" aria-label="操作中心"><svg width="18" height="17" fill="none" stroke="#fff"><path d="M1.500 1.500h15v11H12l-3 3-3-3H1.500z"/></svg></button>
</div>

<div class="ime d-flex align-items-center"><svg class="logo" viewBox="0 0 30 30" fill="none"><use href="#i-sogou"/></svg>
<button class="tiny fw-bold fs-6" aria-label="中文">中</button><button class="tiny" aria-label="标点"><svg width="14" height="12"><circle cx="3" cy="3" r="2" fill="none" stroke="#1c6fc4"/><path d="M9 6h3v3l-2 3" fill="#1c6fc4"/></svg></button>
<button class="tiny" aria-label="语音"><svg width="12" height="15" fill="none" stroke="#1c6fc4" stroke-width="1.500"><rect x="4" y="1" width="4" height="8" rx="2" fill="#1c6fc4"/><path d="M1 6c0 7 10 7 10 0M6 11v3M3 14h6"/></svg></button>
<button class="tiny" aria-label="键盘"><svg width="16" height="12"><rect width="16" height="12" rx="1" fill="#1c6fc4"/><path d="M2 3.500h12M2 6h12" stroke="#fff" stroke-dasharray="2 1"/><path d="M4 9h8" stroke="#fff"/></svg></button>
<button class="tiny" aria-label="用户"><svg width="16" height="14" fill="#b9c4d4"><circle cx="6" cy="3" r="3"/><path d="M0 13c0-8 12-8 12 0z"/><path d="M7 8h8v5H7z" fill="#fff" stroke="#b9c4d4"/></svg></button>
<button class="tiny" aria-label="皮肤"><svg width="14" height="13"><path d="M4 0c1 2 5 2 6 0l4 3-2 3-1-1v8H3V5L2 6 0 3z" fill="#1c6fc4"/></svg></button>
<button class="tiny" aria-label="工具"><svg width="15" height="15"><path d="M1 12l7-6c-1-4 2-6 5-5l-2 3 2 1 2-2c0 4-3 6-6 5l-6 6c-1 0-2-1-2-2z" fill="#1c6fc4"/></svg></button>
</div>

<script src="https://cdn.jsdelivr.net/npm/bootstrap@5.3.0/dist/js/bootstrap.bundle.min.js"></script>
<script>
// Component tree: [label, children]; a child is [icon, label, shortcut, flag].
const data=[
["常用构件类型",[["grid","轴网","(J)"],["raft","筏板基础","(M)"],["col","框柱","(Z)"],["wall","剪力墙","(Q)"],["beam","梁","(L)"],["slab","现浇板","(B)"]]],
["轴线"],["柱"],["墙"],["门窗洞"],["梁"],
["板",[["slab","现浇板","(B)"],["spir","螺旋板","(B)"],["cap","柱帽","(V)"],["hole","板洞","(N)"],["srb","板受力筋","(S)"],["neg","板负筋","(F)"],["band","楼层板带","(H)"]]],
["基础"],["其它"],
["自定义",[["x","自定义点",""],["poly","自定义线","(X)","new"],["hat","自定义面",""],["dimc","尺寸标注","(W)"]]],
["<span class='mono'>CAD</span>识别",null,"new"]];
const ic=n=>`<svg class="ic"><use href="#i-${n}"/></svg>`;
const tag=ic("book")+'<span class="newtag">NEW</span>';
document.getElementById("tree").innerHTML=data.map(([t,kids,flag])=>
`<li class="${kids?"open":""}"><div class="node top"><button class="twist" aria-label="展开"></button>${ic(kids?"open":"fold")}<span>${t}</span>${flag?tag:""}</div>`+
(kids?`<ul class="kids">`+kids.map(([i,l,k,f])=>`<li class="node">${ic(i)}<span class="${f?"picked":""}">${l}<span class="mono">${k}</span></span>${f?tag:""}</li>`).join("")+"</ul>":"")+"</li>").join("");

// Rebar cage: sloping verticals, bottom bars and distribution bars, in model coordinates.
const out=[];
const bar=(d,w)=>{out.push(`<path d="${d}" stroke="#6f6a58" stroke-width="${w}"/><path d="${d}" stroke="#7d7668" stroke-width="${w-3}"/><path d="${d}" stroke="#857f74" stroke-width="3"/><path d="${d}" stroke="#5c5645" stroke-opacity=".2" stroke-width="${w}" stroke-dasharray="1 2"/>`)};
const pink=d=>out.push(`<path d="${d}" stroke="#9d908a" stroke-width="2.4"/>`);
pink("M592 197L1366 418");pink("M898 197L1366 331");pink("M1199 197L1366 245");
for(let k=0;k<12;k++)bar(`M${568+33.3*k} ${401+9.7*k}L${968+33.3*k} ${377+9.7*k}`,10.5);
for(let k=0;k<11;k++)out.push(`<path d="M${602+33.3*k} ${405+9.7*k}L${964+33.3*k} ${383+9.7*k}" stroke="#000" stroke-dasharray="13 20"/>`);
pink("M575 278L1249 472");
out.push('<path d="M562 197L549 291L598 288" stroke="#fff" stroke-width="1.700"/>');
const tops=[580,616,650,684,720,754,788,823,858,892,927,961,996,1031,1066,1100,1135,1152,1187,1222,1256,1291,1326,1360];
tops.forEach((x,k)=>{
 if(k<10){const y=382+9.5*k,b=x-.128*(y-197),e=`M${b} ${y-1}Q${b-1} ${y+14} ${b+14} ${y+19}`;bar(`M${x} 190L${b} ${y}`,9);
  out.push(`<path d="${e}" stroke="#6d6652" stroke-width="10"/><path d="${e}" stroke="#5f5538" stroke-width="4"/><path d="${e}" stroke="#4c452c" stroke-opacity=".5" stroke-width="9" stroke-dasharray="0 7 9 20"/>`);}
 else bar(`M${x} 190L${x-36} 480`,9);
});
out.push(`<path d="M549 291L1190 475" stroke="#fff" stroke-width="1.800"/>
<g stroke="#c4c4c4" stroke-opacity=".7"><circle cx="767.500" cy="336" r="123.500"/><circle cx="767.500" cy="212" r="8"/><circle cx="891" cy="336" r="8"/><circle cx="767.500" cy="459" r="8"/><circle cx="644" cy="336" r="8"/></g>
<path d="M170 382L490 475" stroke="#8c0000"/>
<path d="M225 425L231 386" stroke="#0a7cff" stroke-width="4"/><path d="M232 377l5 12h-10z" fill="#0a7cff"/><path d="M235 377h7l-7 6h8" stroke="#0a7cff"/>
<path d="M225 424L197 417" stroke="#f00" stroke-width="3.500"/><path d="M187 415l12-1-3 8z" fill="#f00"/><path d="M179 412l9 8m0-8l-9 8" stroke="#c00"/>
<path d="M225 425L200 427" stroke="#0f0" stroke-width="3.500"/><path d="M191 427l11-5v9z" fill="#0f0"/><path d="M183 419l5 4 5-5m-5 5v5" stroke="#0c0"/>`);
document.getElementById("scene").innerHTML=`<g transform="translate(-170 -197)">${out.join("")}</g>`;
</script>
</body>
</html>
